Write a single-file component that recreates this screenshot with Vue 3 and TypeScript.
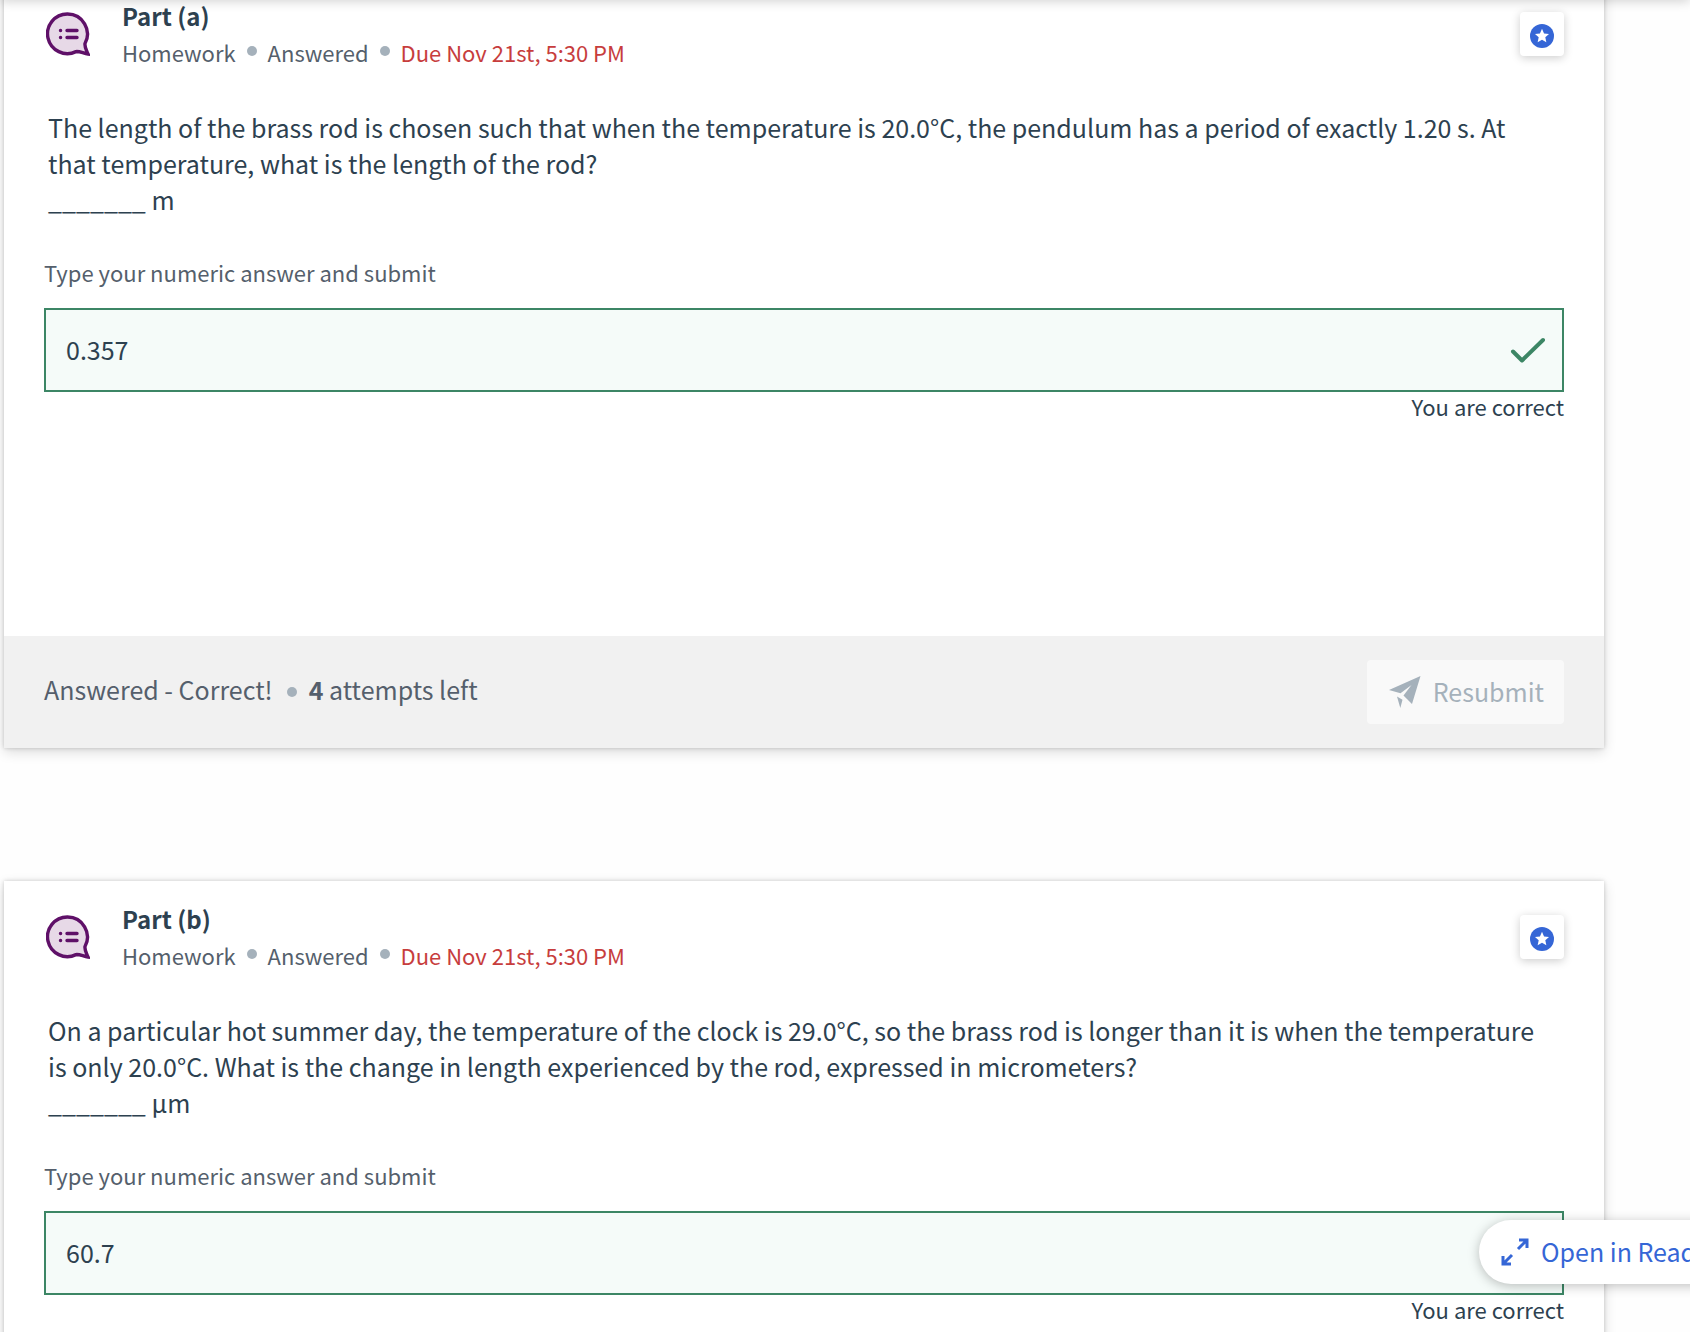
<script setup lang="ts">
interface Part {
  id: string
  title: string
  question: string
  unit: string
  answer: string
  attemptsLeft?: number
}

const parts: Part[] = [
  {
    id: 'a',
    title: 'Part (a)',
    question:
      'The length of the brass rod is chosen such that when the temperature is 20.0°C, the pendulum has a period of exactly 1.20 s. At that temperature, what is the length of the rod?',
    unit: 'm',
    answer: '0.357',
    attemptsLeft: 4,
  },
  {
    id: 'b',
    title: 'Part (b)',
    question:
      'On a particular hot summer day, the temperature of the clock is 29.0°C, so the brass rod is longer than it is when the temperature is only 20.0°C. What is the change in length experienced by the rod, expressed in micrometers?',
    unit: 'µm',
    answer: '60.7',
  },
]
</script>

<template>
  <div class="page">
    <div class="topbar-shadow"></div>
    <main class="parts">
      <article v-for="part in parts" :key="part.id" class="card">
        <header class="head">
          <svg class="bubble" width="44" height="44" viewBox="0 0 44 44" aria-hidden="true">
            <path
              d="M21.500 2A19.800 19.800 0 1 0 30 39.600C34 39.200 37.500 41.500 42 42C40.500 38.500 38.500 35.500 39 31.500A20 20 0 0 0 21.500 2Z"
              fill="#e7d9e7"
              stroke="#5f1068"
              stroke-width="3.400"
            />
            <g stroke="#5f1068" stroke-width="3.400" stroke-linecap="round">
              <path d="M21 18.500h10M21 25.500h10M14.500 18.500h.1M14.500 25.500h.1" />
            </g>
          </svg>
          <div class="heading">
            <h2 class="title">{{ part.title }}</h2>
            <p class="meta">
              <span>Homework</span><i class="dot"></i><span>Answered</span><i class="dot"></i
              ><span class="due">Due Nov 21st, 5:30 PM</span>
            </p>
          </div>
          <button class="star" type="button" aria-label="Bookmark">
            <svg width="24" height="24" viewBox="0 0 24 24" aria-hidden="true">
              <circle cx="12" cy="12" r="12" fill="#3566d6" />
              <path
                d="M12 4.800l2.050 4.600 4.950.5-3.700 3.350 1.050 4.950L12 15.700l-4.350 2.500 1.050-4.950L5 9.900l4.950-.5z"
                fill="#fff"
              />
            </svg>
          </button>
        </header>

        <div class="question">
          <p>{{ part.question }}</p>
          <p>_______ {{ part.unit }}</p>
        </div>

        <div class="answer">
          <label :for="'answer-' + part.id">Type your numeric answer and submit</label>
          <div class="field">
            <input :id="'answer-' + part.id" type="text" :value="part.answer" />
            <svg class="check" width="36" height="28" viewBox="0 0 36 28" aria-hidden="true">
              <path
                d="M3 15.500l9 9L33 4"
                fill="none"
                stroke="#3c8665"
                stroke-width="4"
                stroke-linecap="round"
                stroke-linejoin="round"
              />
            </svg>
          </div>
          <p class="feedback">You are correct</p>
        </div>

        <footer v-if="part.attemptsLeft" class="foot">
          <p class="status">
            <span>Answered - Correct!</span><i class="dot"></i
            ><span><b>{{ part.attemptsLeft }}</b> attempts left</span>
          </p>
          <button class="resubmit" type="button" disabled>
            <svg width="32" height="32" viewBox="0 0 32 32" aria-hidden="true">
              <path
                d="M31.500 0L0 14l11.500 3.200L22.500 9l-8 10.500L23 28zM8 20.500l5.500 3.200L11.300 32z"
                fill="#a5b1bb"
              />
            </svg>
            <span>Resubmit</span>
          </button>
        </footer>
      </article>
    </main>

    <button class="reader" type="button">
      <svg width="28" height="28" viewBox="0 0 28 28" aria-hidden="true">
        <g fill="none" stroke="#3566d6" stroke-width="3">
          <path d="M18 2h8v8M26 2l-9 9M2 18v8h8M2 26l9-9" />
        </g>
      </svg>
      <span>Open in Reader</span>
    </button>
  </div>
</template>

<style>
body {
  margin: 0;
  background: #fefefe;
}
</style>

<style scoped>
* {
  box-sizing: border-box;
}

.page {
  position: relative;
  height: 100vh;
  overflow: hidden;
  background: #fefefe;
  color: #2d4150;
  font-family: 'Noto Sans CJK SC', 'Noto Sans', sans-serif;
  font-size: 25px;
  line-height: 36px;
}

p,
h2 {
  margin: 0;
}

button,
input {
  font: inherit;
}

.topbar-shadow {
  position: absolute;
  top: -8px;
  left: 0;
  right: 0;
  height: 8px;
  z-index: 2;
  box-shadow: 0 0 12px rgba(0, 0, 0, 0.25);
}

/* The list is scrolled slightly past the top of the first card. */
.parts {
  display: flex;
  flex-direction: column;
  gap: 133px;
  margin: -22px 86px 0 4px;
}

.card {
  display: flex;
  flex-direction: column;
  min-height: 770px;
  background: #fff;
  box-shadow:
    0 4px 12px rgba(0, 0, 0, 0.14),
    0 0 4px rgba(0, 0, 0, 0.18);
}

.head {
  display: flex;
  align-items: flex-start;
  padding: 22px 40px 0;
}

.bubble {
  flex: none;
  margin: 12px 32px 0 2px;
}

.heading {
  flex: 1;
}

.title {
  font-size: 24px;
  font-weight: 700;
  line-height: 32px;
}

.meta {
  display: flex;
  align-items: center;
  margin-top: 2px;
  font-size: 22px;
  color: #555f6c;
}

.dot {
  width: 10px;
  height: 10px;
  border-radius: 50%;
  background: #a5b1bb;
}

.meta .dot {
  margin: 0 11px 2px;
}

.due {
  color: #c73d3d;
}

.star {
  display: flex;
  align-items: center;
  justify-content: center;
  width: 44px;
  height: 44px;
  margin-top: 12px;
  padding: 4px 0 0;
  border: 0;
  border-radius: 4px;
  background: #fff;
  box-shadow: 0 2px 10px rgba(0, 0, 0, 0.2);
}

.question {
  padding: 39px 60px 0 44px;
}

.answer {
  display: flex;
  flex-direction: column;
  padding: 40px 40px 0;
  font-size: 22px;
  line-height: 30px;
}

.answer label {
  color: #555f6c;
}

.field {
  display: flex;
  align-items: center;
  height: 84px;
  margin-top: 21px;
  padding-right: 16px;
  border: 2px solid #3c8665;
  background: #f5fbf9;
  font-size: 25px;
}

.field input {
  flex: 1;
  min-width: 0;
  height: 100%;
  padding: 0 20px 2px;
  border: 0;
  outline: 0;
  background: transparent;
  color: inherit;
}

.feedback {
  line-height: 28px;
  text-align: right;
}

.foot {
  display: flex;
  align-items: center;
  justify-content: space-between;
  height: 112px;
  margin-top: auto;
  padding: 0 40px;
  background: #f1f1f1;
}

.status {
  display: flex;
  align-items: center;
  padding-bottom: 6px;
  color: #555f6c;
}

.status .dot {
  margin: 6px 12px 0 14px;
}

.resubmit {
  display: flex;
  align-items: center;
  gap: 12px;
  height: 64px;
  padding: 0 20px 0 22px;
  border: 0;
  border-radius: 4px;
  background: #f9f9f9;
  color: #a5b1bb;
}

.resubmit span,
.reader span {
  padding-bottom: 2px;
}

.reader {
  position: absolute;
  top: 1220px;
  left: calc(100% - 211px);
  z-index: 3;
  display: flex;
  align-items: center;
  gap: 12px;
  height: 64px;
  padding: 0 22px;
  border: 0;
  border-radius: 32px;
  background: #fff;
  color: #3566d6;
  white-space: nowrap;
  box-shadow: 0 2px 12px rgba(0, 0, 0, 0.25);
}
</style>
